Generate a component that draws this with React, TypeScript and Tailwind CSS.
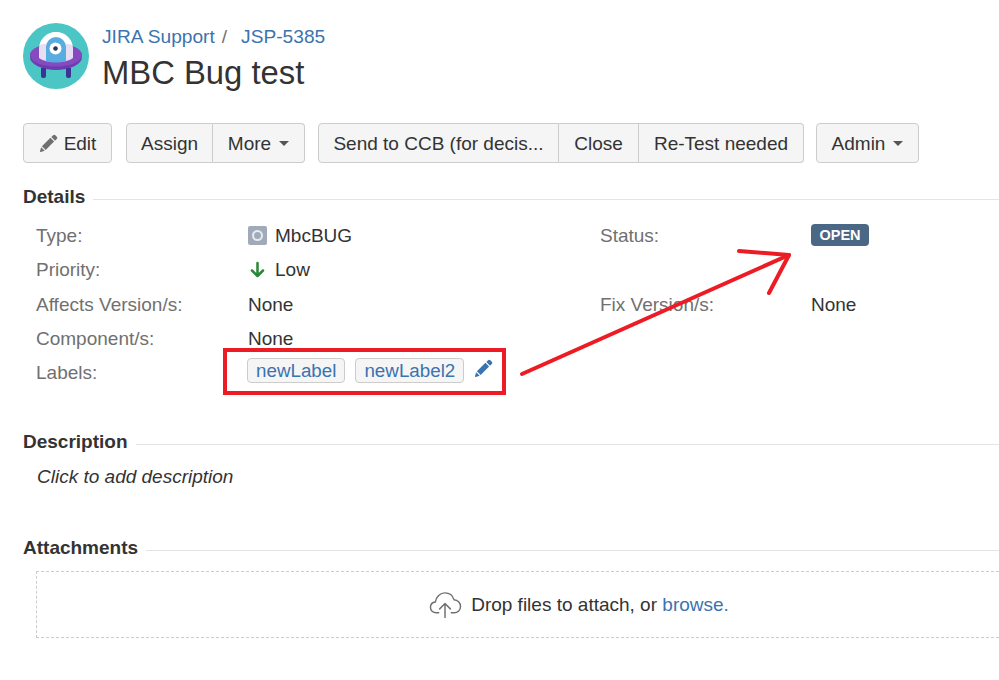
import { ReactNode } from "react";

function Pencil({ className }: { className: string }) {
  return (
    <svg viewBox="0 0 20 20" className={className} fill="currentColor">
      <path d="M14.800 1.300c.7-.7 1.700-.7 2.400 0l1.500 1.500c.7.7.7 1.700 0 2.400l-1.800 1.800-3.900-3.900 1.800-1.800zM12 4L15.900 7.900 7 16.800 3.100 12.900 12 4zM2.300 14l3.700 3.700-4.200 1.300c-.5.100-.9-.3-.8-.8L2.300 14z" />
    </svg>
  );
}

function Caret() {
  return <span className="ml-[8px] h-0 w-0 border-x-[5.5px] border-t-[5.5px] border-x-transparent border-t-[#555]" />;
}

function Btn({ children, className = "" }: { children: ReactNode; className?: string }) {
  return (
    <div className={`flex h-[40px] items-center justify-center border border-[#ccc] bg-[#f5f5f5] pt-px text-[#333] ${className}`}>
      {children}
    </div>
  );
}

function Section({ title }: { title: string }) {
  return (
    <div className="flex items-center">
      <h4 className="h-[24px] pr-[8px] text-[19px] leading-[24px] font-bold text-[#333]">{title}</h4>
      <div className="mt-[4px] h-px flex-1 bg-[#e4e4e4]" />
    </div>
  );
}

function Label({ children }: { children: ReactNode }) {
  return <div className="text-[#707070]">{children}</div>;
}

function Tag({ children }: { children: ReactNode }) {
  return (
    <span className="flex h-[25px] items-center rounded-[4px] border border-[#ccc] bg-[#f5f5f5] px-[8px] text-[18.8px] text-[#3b73af]">
      {children}
    </span>
  );
}

export default function App() {
  return (
    <div className="relative h-[680px] w-[999px] overflow-hidden bg-white pt-[23px] pl-[23px] font-['Liberation_Sans',Arial,sans-serif] text-[19px] leading-[24px] text-[#333]">
      <header className="flex h-[66px]">
        <svg viewBox="0 0 66 66" className="h-[66px] w-[66px]">
          <circle cx="33" cy="33" r="33" fill="#4bc6c4" />
          <ellipse cx="33" cy="34" rx="26" ry="13" fill="#6f3bb0" />
          <ellipse cx="33" cy="32" rx="26" ry="11.500" fill="#8549c0" />
          <path d="M18 45h5v8a2 2 0 0 1-2 2h-1a2 2 0 0 1-2-2zM43 45h5v8a2 2 0 0 1-2 2h-1a2 2 0 0 1-2-2z" fill="#3d3296" />
          <path d="M16 26a17 17 0 0 1 34 0v9c-4 3-10 4-17 4s-13-1-17-4z" fill="#e6dff2" />
          <path d="M16.500 22a17 17 0 0 1 33 0c-4-2-29-2-33 0z" fill="#fff" />
          <path d="M23 38V24a10 10 0 0 1 20 0v14c-3 1-6 1.500-10 1.500s-7-.5-10-1.500z" fill="#57ace0" />
          <circle cx="32.500" cy="25.500" r="6" fill="#fff" />
          <circle cx="32.500" cy="25.500" r="2.300" fill="#253858" />
        </svg>
        <div className="ml-[13px] flex flex-col">
          <div className="mt-[2px] flex h-[24px] text-[19.15px] text-[#3b73af]">
            <span>JIRA Support</span>
            <span className="ml-[7px] text-[#707070]">/</span>
            <span className="ml-[14px]">JSP-5385</span>
          </div>
          <h1 className="mt-[5px] text-[32.8px] leading-[38px] text-[#333]">MBC Bug test</h1>
        </div>
      </header>

      <div className="mt-[34px] flex">
        <Btn className="w-[89px] rounded-[4px]">
          <Pencil className="mr-[6px] h-[19px] w-[19px] text-[#707070]" />
          Edit
        </Btn>
        <div className="ml-[14px] flex">
          <Btn className="w-[87px] rounded-l-[4px]">Assign</Btn>
          <Btn className="w-[92px] rounded-r-[4px] border-l-0">
            More
            <Caret />
          </Btn>
        </div>
        <div className="ml-[13px] flex">
          <Btn className="w-[241px] rounded-l-[4px]">Send to CCB (for decis...</Btn>
          <Btn className="w-[80px] border-l-0">Close</Btn>
          <Btn className="w-[165px] rounded-r-[4px] border-l-0">Re-Test needed</Btn>
        </div>
        <Btn className="ml-[12px] w-[103px] rounded-[4px]">
          Admin
          <Caret />
        </Btn>
      </div>

      <section className="mt-[22px]">
        <Section title="Details" />
        <div className="mt-[15px] ml-[13px] grid grid-cols-[212px_352px_211px_1fr] auto-rows-[34.25px]">
          <Label>Type:</Label>
          <div className="flex">
            <span className="mt-[2px] mr-[8px] flex h-[19px] w-[19px] items-center justify-center rounded-[2px] bg-[#a0aab9]">
              <span className="h-[11px] w-[11px] rounded-full border-[2.5px] border-[#e8ebef]" />
            </span>
            MbcBUG
          </div>
          <Label>Status:</Label>
          <div>
            <span className="block h-[22px] w-[58px] rounded-[4px] bg-[#4a6785] text-center text-[14.5px] leading-[22px] font-bold text-white">
              OPEN
            </span>
          </div>

          <Label>Priority:</Label>
          <div className="col-span-3 flex">
            <svg viewBox="0 0 19 19" className="mt-[2px] mr-[8px] h-[19px] w-[19px]" fill="none" stroke="#2a8735" strokeWidth="2.500" strokeLinecap="round" strokeLinejoin="round">
              <path d="M9.500 3v13M4 10.500l5.500 5.500 5.500-5.500" />
            </svg>
            Low
          </div>

          <Label>Affects Version/s:</Label>
          <div>None</div>
          <Label>Fix Version/s:</Label>
          <div>None</div>

          <Label>Component/s:</Label>
          <div className="col-span-3">None</div>

          <Label>Labels:</Label>
          <div className="col-span-3 -mt-[3px] -ml-px flex items-start gap-[10px]">
            <Tag>newLabel</Tag>
            <Tag>newLabel2</Tag>
            <Pencil className="mt-[1px] h-[19px] w-[19px] text-[#3b73af]" />
          </div>
        </div>
      </section>

      <section className="mt-[35px]">
        <Section title="Description" />
        <p className="mt-[11px] ml-[14px] italic">Click to add description</p>
      </section>

      <section className="mt-[47px]">
        <Section title="Attachments" />
        <div className="mt-[11px] ml-[13px] flex h-[67px] w-[1088px] items-center justify-center border border-dashed border-[#ccc]">
          <svg viewBox="0 0 34 28" className="mr-[9px] -ml-[2px] h-[28px] w-[33px]" fill="none" stroke="#707070" strokeWidth="1.500" strokeLinecap="round" strokeLinejoin="round">
            <path d="M10 22H7.500C4 22 1.500 19.500 1.500 16.500c0-3 2.200-5.200 5-5.500C7.300 5.500 11.500 1.500 16.500 1.500c4.500 0 8 3 9.200 7 3.800.2 6.800 3.200 6.800 7 0 3.700-3 6.500-6.500 6.500H23" />
            <path d="M16.500 27V12.500M11 18l5.500-5.500L22 18" />
          </svg>
          <span>
            Drop files to attach, or <span className="text-[#3b73af]">browse.</span>
          </span>
        </div>
      </section>

      {/* annotations drawn over the screenshot */}
      <div className="absolute top-[348px] left-[223px] h-[47px] w-[283px] border-4 border-[#ed1c24]" />
      <svg viewBox="0 0 999 680" className="absolute top-0 left-0 h-[680px] w-[999px]" fill="none" stroke="#ed1c24" strokeWidth="4" strokeLinecap="round" strokeLinejoin="round">
        <path d="M522 374L789 255" />
        <path d="M739 251L789 255L769 293" />
      </svg>
    </div>
  );
}
